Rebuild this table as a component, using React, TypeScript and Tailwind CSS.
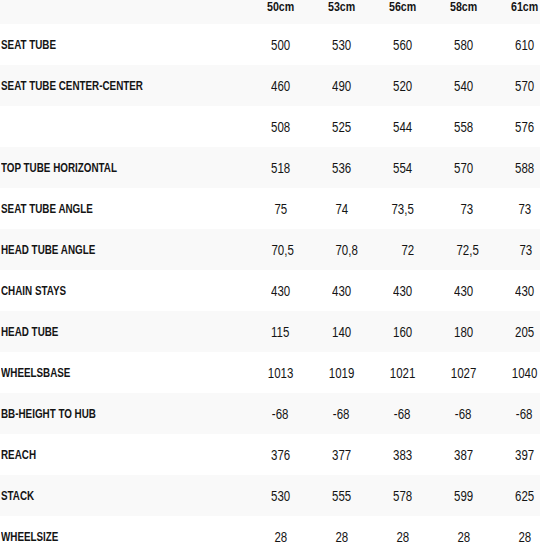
import React from "react";

const sizes = ["50cm", "53cm", "56cm", "58cm", "61cm"];
type Row = [string, string[], number[]?];
const rows: Row[] = [
  ["SEAT TUBE", ["500", "530", "560", "580", "610"]],
  ["SEAT TUBE CENTER-CENTER", ["460", "490", "520", "540", "570"]],
  ["", ["508", "525", "544", "558", "576"]],
  ["TOP TUBE HORIZONTAL", ["518", "536", "554", "570", "588"]],
  ["SEAT TUBE ANGLE", ["75", "74", "73,5", "73", "73"], [0, -2, 0, 6, 0]],
  ["HEAD TUBE ANGLE", ["70,5", "70,8", "72", "72,5", "73"], [4, 10, 10, 8, 2]],
  ["CHAIN STAYS", ["430", "430", "430", "430", "430"]],
  ["HEAD TUBE", ["115", "140", "160", "180", "205"]],
  ["WHEELSBASE", ["1013", "1019", "1021", "1027", "1040"]],
  ["BB-HEIGHT TO HUB", ["-68", "-68", "-68", "-68", "-68"]],
  ["REACH", ["376", "377", "383", "387", "397"]],
  ["STACK", ["530", "555", "578", "599", "625"]],
  ["WHEELSIZE", ["28", "28", "28", "28", "28"]],
];

export default function App() {
  return (
    <div
      className="w-[540px] h-[542px] overflow-hidden bg-white text-[#141414]"
      style={{ fontFamily: '"Liberation Sans", Arial, sans-serif' }}
    >
      <div className="w-[556px]">
        <div className="grid grid-cols-[250px_repeat(5,61px)] h-[24px] bg-[#f9f9f9] items-start">
          <div />
          {sizes.map((s) => (
            <div key={s} className="flex justify-center text-[13px] font-bold leading-none pt-[0px]">
              <span className="inline-block scale-x-[0.82] whitespace-nowrap">{s}</span>
            </div>
          ))}
        </div>
        {rows.map(([label, vals, offs], i) => (
          <div
            key={i}
            className={`grid grid-cols-[250px_repeat(5,61px)] h-[41px] items-center ${i % 2 === 1 ? "bg-[#f9f9f9]" : "bg-white"}`}
          >
            <div className="text-[12px] font-bold pl-[1px] leading-none">
              <span className="inline-block scale-x-[0.82] origin-left whitespace-nowrap">{label}</span>
            </div>
            {vals.map((v, j) => (
              <div
                key={j}
                className="flex justify-center text-[14px] leading-none"
                style={offs ? { paddingLeft: offs[j] } : undefined}
              >
                <span className="inline-block scale-x-[0.82] whitespace-nowrap">{v}</span>
              </div>
            ))}
          </div>
        ))}
      </div>
    </div>
  );
}
